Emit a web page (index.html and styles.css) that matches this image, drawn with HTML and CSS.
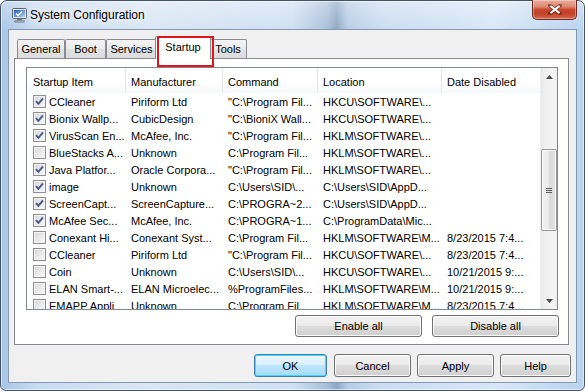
FILE: index.html
```html
<!DOCTYPE html>
<html>
<head>
<meta charset="utf-8">
<link rel="stylesheet" href="styles.css">
</head>
<body>
<div class="window">
  <div class="titlebar">
    <svg class="appicon" width="17" height="16" viewBox="0 0 17 16">
      <defs>
        <linearGradient id="scr" x1="0" y1="0" x2="1" y2="1">
          <stop offset="0" stop-color="#2a5cb8"/>
          <stop offset="0.6" stop-color="#6f9fe0"/>
          <stop offset="1" stop-color="#bcd6f5"/>
        </linearGradient>
      </defs>
      <rect x="1.5" y="1.5" width="14" height="10" rx="1" fill="#dfe3ea" stroke="#5b6675"/>
      <rect x="3" y="3" width="11" height="7" fill="url(#scr)"/>
      <path d="M5 6.5l2 2 4-4" fill="none" stroke="#ffffff" stroke-width="1.3"/>
      <rect x="6" y="12" width="5" height="1.5" fill="#7a8290"/>
      <rect x="3.5" y="13.5" width="10" height="1.8" rx="0.6" fill="#a8b0bb" stroke="#6b7380" stroke-width="0.6"/>
    </svg>
    <span class="title">System Configuration</span>
    <div class="close">
      <svg width="14" height="11" viewBox="0 0 14 11">
        <path d="M2 1.5 L12 9.5 M12 1.5 L2 9.5" stroke="#5a1a10" stroke-width="4" stroke-linecap="square" fill="none" opacity="0.55"/>
        <path d="M2.5 2 L11.5 9 M11.5 2 L2.5 9" stroke="#ffffff" stroke-width="2.2" fill="none"/>
      </svg>
    </div>
  </div>

  <div class="client">
    <div class="tabs">
      <div class="tab t-general">General</div>
      <div class="tab t-boot">Boot</div>
      <div class="tab t-services">Services</div>
      <div class="tab t-startup sel">Startup</div>
      <div class="tab t-tools">Tools</div>
    </div>

    <div class="panel">
      <div class="list">
        <div class="listmain">
          <div class="row header">
            <div class="cell c1">Startup Item</div>
            <div class="cell">Manufacturer</div>
            <div class="cell">Command</div>
            <div class="cell">Location</div>
            <div class="cell">Date Disabled</div>
          </div>

          <div class="row">
            <div class="cell c1"><span class="cb"><svg width="11" height="11" viewBox="0 0 11 11"><path d="M2 5.2 L4.4 7.8 L9 2.4" class="chk"/></svg></span>CCleaner</div>
            <div class="cell">Piriform Ltd</div>
            <div class="cell">"C:\Program Fil...</div>
            <div class="cell">HKCU\SOFTWARE\...</div>
            <div class="cell"></div>
          </div>
          <div class="row">
            <div class="cell c1"><span class="cb"><svg width="11" height="11" viewBox="0 0 11 11"><path d="M2 5.2 L4.4 7.8 L9 2.4" class="chk"/></svg></span>Bionix Wallp...</div>
            <div class="cell">CubicDesign</div>
            <div class="cell">"C:\BioniX Wall...</div>
            <div class="cell">HKCU\SOFTWARE\...</div>
            <div class="cell"></div>
          </div>
          <div class="row">
            <div class="cell c1"><span class="cb"><svg width="11" height="11" viewBox="0 0 11 11"><path d="M2 5.2 L4.4 7.8 L9 2.4" class="chk"/></svg></span>VirusScan En...</div>
            <div class="cell">McAfee, Inc.</div>
            <div class="cell">"C:\Program Fil...</div>
            <div class="cell">HKLM\SOFTWARE\...</div>
            <div class="cell"></div>
          </div>
          <div class="row">
            <div class="cell c1"><span class="cb"></span>BlueStacks A...</div>
            <div class="cell">Unknown</div>
            <div class="cell">C:\Program Fil...</div>
            <div class="cell">HKLM\SOFTWARE\...</div>
            <div class="cell"></div>
          </div>
          <div class="row">
            <div class="cell c1"><span class="cb"><svg width="11" height="11" viewBox="0 0 11 11"><path d="M2 5.2 L4.4 7.8 L9 2.4" class="chk"/></svg></span>Java Platfor...</div>
            <div class="cell">Oracle Corpora...</div>
            <div class="cell">"C:\Program Fil...</div>
            <div class="cell">HKLM\SOFTWARE\...</div>
            <div class="cell"></div>
          </div>
          <div class="row">
            <div class="cell c1"><span class="cb"><svg width="11" height="11" viewBox="0 0 11 11"><path d="M2 5.2 L4.4 7.8 L9 2.4" class="chk"/></svg></span>image</div>
            <div class="cell">Unknown</div>
            <div class="cell">C:\Users\SID\...</div>
            <div class="cell">C:\Users\SID\AppD...</div>
            <div class="cell"></div>
          </div>
          <div class="row">
            <div class="cell c1"><span class="cb"><svg width="11" height="11" viewBox="0 0 11 11"><path d="M2 5.2 L4.4 7.8 L9 2.4" class="chk"/></svg></span>ScreenCapt...</div>
            <div class="cell">ScreenCapture...</div>
            <div class="cell">C:\PROGRA~2...</div>
            <div class="cell">C:\Users\SID\AppD...</div>
            <div class="cell"></div>
          </div>
          <div class="row">
            <div class="cell c1"><span class="cb"><svg width="11" height="11" viewBox="0 0 11 11"><path d="M2 5.2 L4.4 7.8 L9 2.4" class="chk"/></svg></span>McAfee Sec...</div>
            <div class="cell">McAfee, Inc.</div>
            <div class="cell">C:\PROGRA~1...</div>
            <div class="cell">C:\ProgramData\Mic...</div>
            <div class="cell"></div>
          </div>
          <div class="row">
            <div class="cell c1"><span class="cb"></span>Conexant Hi...</div>
            <div class="cell">Conexant Syst...</div>
            <div class="cell">C:\Program Fil...</div>
            <div class="cell">HKLM\SOFTWARE\M...</div>
            <div class="cell">8/23/2015 7:4...</div>
          </div>
          <div class="row">
            <div class="cell c1"><span class="cb"></span>CCleaner</div>
            <div class="cell">Piriform Ltd</div>
            <div class="cell">"C:\Program Fil...</div>
            <div class="cell">HKCU\SOFTWARE\...</div>
            <div class="cell">8/23/2015 7:4...</div>
          </div>
          <div class="row">
            <div class="cell c1"><span class="cb"></span>Coin</div>
            <div class="cell">Unknown</div>
            <div class="cell">C:\Users\SID\...</div>
            <div class="cell">HKCU\SOFTWARE\...</div>
            <div class="cell">10/21/2015 9:...</div>
          </div>
          <div class="row">
            <div class="cell c1"><span class="cb"></span>ELAN Smart-...</div>
            <div class="cell">ELAN Microelec...</div>
            <div class="cell">%ProgramFiles...</div>
            <div class="cell">HKLM\SOFTWARE\M...</div>
            <div class="cell">10/21/2015 9:...</div>
          </div>
          <div class="row">
            <div class="cell c1"><span class="cb"></span>EMAPP Appli...</div>
            <div class="cell">Unknown</div>
            <div class="cell">C:\Program Fil...</div>
            <div class="cell">HKLM\SOFTWARE\M...</div>
            <div class="cell">8/23/2015 7:4...</div>
          </div>
        </div>

        <div class="scrollbar">
          <div class="sb-arrow">
            <svg width="7" height="4" viewBox="0 0 7 4"><path d="M0 4 L3.5 0 L7 4 Z" fill="#4a4a4a"/></svg>
          </div>
          <div class="sb-track">
            <div class="sb-thumb">
              <div class="grip"></div>
            </div>
          </div>
          <div class="sb-arrow">
            <svg width="7" height="4" viewBox="0 0 7 4"><path d="M0 0 L7 0 L3.5 4 Z" fill="#4a4a4a"/></svg>
          </div>
        </div>
      </div>

      <div class="panel-buttons">
        <div class="btn wide">Enable all</div>
        <div class="btn wide">Disable all</div>
      </div>
    </div>

    <div class="dialog-buttons">
      <div class="btn default b-ok">OK</div>
      <div class="btn b-cancel">Cancel</div>
      <div class="btn b-apply">Apply</div>
      <div class="btn b-help">Help</div>
    </div>
  </div>
</div>
</body>
</html>
```

FILE: styles.css
```css
* { box-sizing: border-box; }
html, body { margin: 0; padding: 0; }
body {
  width: 585px;
  height: 391px;
  overflow: hidden;
  background: #ffffff;
  font-family: "Liberation Sans", Arial, sans-serif;
  font-size: 11px;
  color: #000;
}

.window {
  width: 585px;
  height: 391px;
  border: 1px solid #42546a;
  border-radius: 7px 7px 6px 6px;
  padding: 0 7px 7px 7px;
  display: flex;
  flex-direction: column;
  background:
    linear-gradient(to bottom, rgba(255,255,255,0.35), rgba(255,255,255,0) 30px),
    linear-gradient(to right, #a9c5e6 0%, #c8dbf0 6%, #d9e6f4 25%, #cfe0f2 50%, #a9bfd8 56%, #8ea8c6 57.6%, #b8cde6 59.5%, #cadcf1 65%, #d8e7f7 85%, #b9d2ee 100%);
  box-shadow: inset 0 0 0 1px rgba(255,255,255,0.55);
}

.titlebar {
  height: 28px;
  display: flex;
  align-items: center;
  position: relative;
}
.appicon { margin-left: 3px; flex: none; }
.title {
  margin-left: 2px;
  font-size: 12px;
  color: #000;
  text-shadow: 0 0 6px #ffffff, 0 0 10px #ffffff;
}
.close {
  position: absolute;
  right: 0;
  top: -1px;
  width: 45px;
  height: 20px;
  border: 1px solid #6b2b22;
  border-top: none;
  border-radius: 0 0 5px 5px;
  background: linear-gradient(to bottom, #e9ab9a 0%, #dd8a74 35%, #c8492f 50%, #c14027 70%, #d46a4c 100%);
  box-shadow: inset 0 0 0 1px rgba(255,255,255,0.35);
  display: flex;
  align-items: center;
  justify-content: center;
}

.client {
  flex: 1;
  border: 1px solid #8499b2;
  background: #f0f0f0;
  display: flex;
  flex-direction: column;
}

/* tabs */
.tabs {
  display: flex;
  align-items: flex-end;
  height: 22px;
  margin: 6px 0 0 8px;
  position: relative;
  z-index: 2;
}
.tab {
  height: 19px;
  border: 1px solid #898c95;
  border-bottom: none;
  border-radius: 2px 2px 0 0;
  background: linear-gradient(to bottom, #f4f4f4, #ebebeb 50%, #e2e2e2 51%, #dcdcdc);
  display: flex;
  align-items: center;
  justify-content: center;
  padding-bottom: 1px;
}
.t-general { width: 48px; }
.t-boot { width: 41px; }
.t-services { width: 51px; }
.t-startup { width: 52px; }
.t-tools { width: 38px; }
.tab.sel {
  width: 56px;
  height: 23px;
  margin: 0 -2px -1px -2px;
  background: #ffffff;
  position: relative;
  z-index: 3;
  padding-bottom: 3px;
}
.tab.sel::after {
  content: "";
  position: absolute;
  left: 1px;
  top: -1px;
  width: 53px;
  height: 27px;
  border: 2px solid #e0161d;
}

/* panel */
.panel {
  margin: 0 7px 0 5px;
  height: 287px;
  border: 1px solid #898c95;
  background: #ffffff;
  padding: 8px 10px 7px 11px;
  display: flex;
  flex-direction: column;
  position: relative;
  z-index: 1;
}

.list {
  height: 243px;
  border: 1px solid #828790;
  display: flex;
  overflow: hidden;
  background: #fff;
}
.listmain {
  flex: 1;
  overflow: hidden;
}
.row {
  display: grid;
  grid-template-columns: 99px 97px 95px 124px 1fr;
  height: 17px;
  align-items: center;
}
.cell {
  padding-left: 5px;
  white-space: nowrap;
  overflow: hidden;
  height: 100%;
  display: flex;
  align-items: center;
}
.cell.c1 { padding-left: 6px; }
.row.header {
  height: 25px;
  background: linear-gradient(to bottom, #ffffff 0%, #ffffff 50%, #f7f8fa 100%);
}
.row.header .cell {
  border-right: 1px solid #e3e5e8;
  padding-top: 2px;
}
.row.header .cell:last-child { border-right: none; }

.cb {
  width: 13px;
  height: 13px;
  border: 1px solid #8e8f8f;
  background: linear-gradient(135deg, #d6d6d6 0%, #eaeaea 55%, #f8f8f8 100%);
  box-shadow: inset 0 0 0 1px #f4f4f4;
  margin-right: 3px;
  flex: none;
  display: flex;
  align-items: center;
  justify-content: center;
}
.cb svg { display: block; }
.chk {
  fill: none;
  stroke: #44598a;
  stroke-width: 1.9;
}

/* scrollbar */
.scrollbar {
  width: 17px;
  display: flex;
  flex-direction: column;
  background: linear-gradient(to right, #e6e6e6 0%, #f0f0f0 20%, #f4f4f4 80%, #ececec 100%);
  border-left: 1px solid #f0f0f0;
}
.sb-arrow {
  height: 17px;
  display: flex;
  align-items: center;
  justify-content: center;
  flex: none;
}
.sb-track {
  flex: 1;
  padding-top: 64px;
}
.sb-thumb {
  height: 82px;
  border: 1px solid #979797;
  border-radius: 2px;
  background: linear-gradient(to right, #f2f2f2 0%, #eaeaea 50%, #dadada 51%, #e0e0e0 100%);
  box-shadow: inset 0 0 0 1px #fbfbfb;
  display: flex;
  align-items: center;
  justify-content: center;
}
.grip {
  width: 6px;
  height: 5px;
  border-top: 1px solid #5d5d5d;
  border-bottom: 1px solid #5d5d5d;
  position: relative;
}
.grip::after {
  content: "";
  position: absolute;
  left: 0;
  right: 0;
  top: 1px;
  height: 1px;
  background: #5d5d5d;
}

/* buttons */
.btn {
  height: 22px;
  border: 1px solid #707070;
  border-radius: 3px;
  background: linear-gradient(to bottom, #f2f2f2 0%, #ebebeb 48%, #dddddd 50%, #cfcfcf 100%);
  box-shadow: inset 0 0 0 1px #fcfcfc;
  display: flex;
  align-items: center;
  justify-content: center;
  font-size: 11px;
}
.panel-buttons {
  margin-top: 5px;
  margin-right: -1px;
  display: flex;
  justify-content: flex-end;
  gap: 10px;
}
.btn.wide { width: 127px; }

.dialog-buttons {
  margin-top: 9px;
  margin-right: 5px;
  display: flex;
  justify-content: flex-end;
  gap: 6px;
}
.dialog-buttons .btn { height: 23px; }
.b-ok { width: 73px; margin-right: 1px; }
.b-cancel { width: 77px; }
.b-apply { width: 77px; }
.b-help { width: 71px; }
.btn.default {
  border-color: #3c7fb1;
  box-shadow: inset 0 0 0 1px #48d7fb;
  background: linear-gradient(to bottom, #eaf6fd 0%, #d9f0fc 48%, #bee6fd 50%, #a7d9f5 100%);
}
```
